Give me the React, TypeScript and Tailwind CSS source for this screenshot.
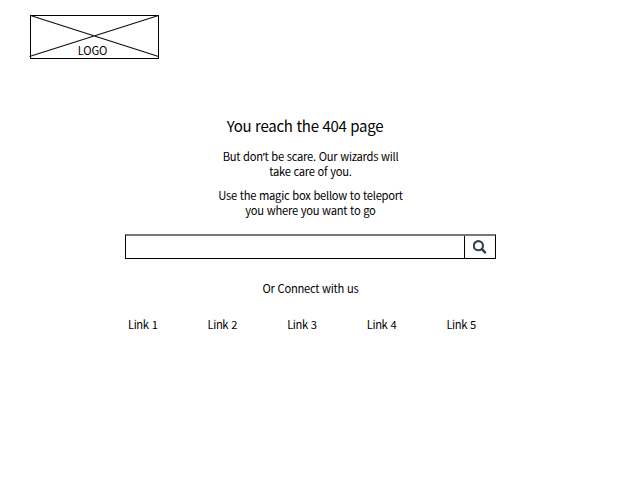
import React from "react";

type LineProps = { children: React.ReactNode; className: string };

function Line({ children, className }: LineProps) {
  return <div className={`flex justify-center whitespace-nowrap ${className}`}>{children}</div>;
}

const links = ["Link 1", "Link 2", "Link 3", "Link 4", "Link 5"];

export default function App() {
  return (
    <div className="h-[480px] w-[640px] overflow-hidden bg-white pl-[30px] pt-[15px] font-['Noto_Sans_CJK_SC','Noto_Sans',sans-serif] text-[11.2px] leading-[14px] tracking-[-0.26px] [word-spacing:0.6px] text-black">
      <header className="relative flex h-[44px] w-[129px] items-end justify-center border border-black pb-px">
        <svg className="absolute -left-px -top-px overflow-visible" width="129" height="44" fill="none" stroke="#111" strokeWidth="1.3">
          <path d="M0.5 0.5 L128.5 41.5 M-0.5 41.5 L128.5 0.5" />
        </svg>
        <span className="relative -left-[2px] tracking-[-0.1px]">LOGO</span>
      </header>

      <main className="ml-[95px] mt-[57px] w-[371px]">
        <h1 className="flex h-5 justify-center pr-[11px] text-[15px] leading-5 tracking-[-0.26px] whitespace-nowrap">You reach the 404 page</h1>
        <div className="mt-[13px]">
          <Line className="h-[15px]">
            <span>But don<span className="font-['Noto_Sans',sans-serif]">’</span>t be scare. Our wizards will</span>
          </Line>
          <Line className="h-[14px]">take care of you.</Line>
        </div>
        <div className="mt-[10px]">
          <Line className="h-[15px]">Use the magic box bellow to teleport</Line>
          <Line className="h-[14px]">you where you want to go</Line>
        </div>

        <form className="mt-[17px] flex h-[25px] border border-t-2 border-black border-t-[#777]" onSubmit={(e) => e.preventDefault()}>
          <input aria-label="Search" className="min-w-0 flex-1 px-2 outline-none" />
          <button aria-label="Submit search" className="flex w-[31px] items-center justify-center border-l border-black pr-px">
            <svg width="14" height="14" viewBox="0 0 14 14" fill="none" stroke="#36424b">
              <circle cx="5.4" cy="5.7" r="4.6" strokeWidth="2.1" />
              <path d="M8.9 9.2 L12 12.3" strokeWidth="2.6" strokeLinecap="round" />
            </svg>
          </button>
        </form>

        <Line className="mt-[22px] h-[14px]">Or Connect with us</Line>
        <nav className="ml-[3px] mt-[22px] flex">
          {links.map((link) => (
            <a key={link} className="w-[79.6px] shrink-0 whitespace-nowrap tracking-[-0.4px] [word-spacing:1px]">{link}</a>
          ))}
        </nav>
      </main>
    </div>
  );
}
